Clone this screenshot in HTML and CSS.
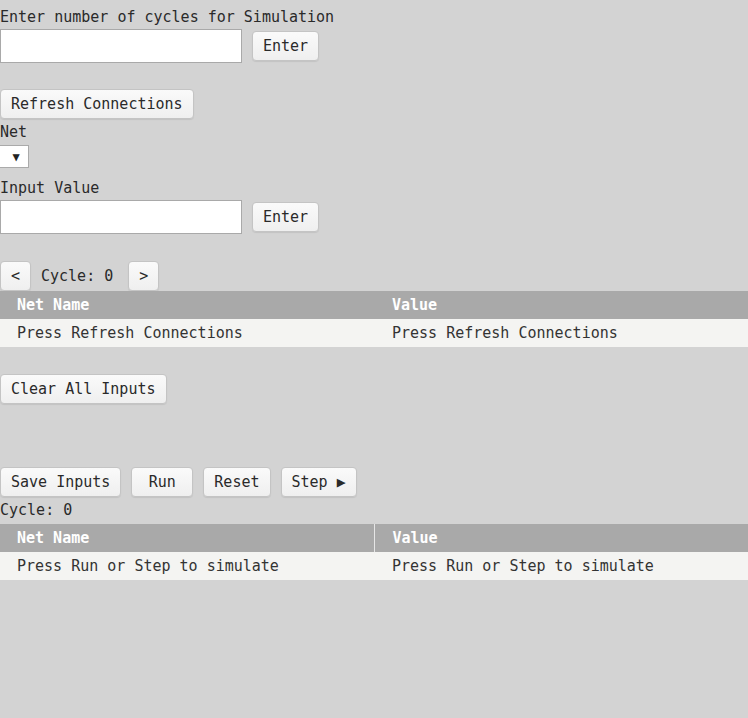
FILE: index.html
```html
<!DOCTYPE html>
<html>
<head>
<meta charset="utf-8">
<link rel="stylesheet" href="styles.css">
</head>
<body>
<div class="page">
  <label class="lbl lbl-first">Enter number of cycles for Simulation</label>
  <div class="field-row">
    <input class="txt" type="text">
    <button class="btn">Enter</button>
  </div>

  <div class="refresh-row">
    <button class="btn">Refresh Connections</button>
  </div>
  <label class="lbl lbl-net">Net</label>
  <div class="select"><span class="arrow">▼</span></div>
  <label class="lbl lbl-input">Input Value</label>
  <div class="field-row field-row-2">
    <input class="txt" type="text">
    <button class="btn">Enter</button>
  </div>

  <div class="cycle-nav">
    <button class="btn btn-sq">&lt;</button>
    <span class="cycle-text">Cycle: 0</span>
    <button class="btn btn-sq">&gt;</button>
  </div>
  <table class="grid">
    <thead><tr><th>Net Name</th><th>Value</th></tr></thead>
    <tbody><tr><td>Press Refresh Connections</td><td>Press Refresh Connections</td></tr></tbody>
  </table>

  <div class="clear-row">
    <button class="btn">Clear All Inputs</button>
  </div>

  <div class="action-row">
    <button class="btn">Save Inputs</button>
    <button class="btn btn-run">Run</button>
    <button class="btn">Reset</button>
    <button class="btn">Step ▶</button>
  </div>
  <div class="cycle-out">Cycle: 0</div>
  <table class="grid grid-split">
    <thead><tr><th>Net Name</th><th>Value</th></tr></thead>
    <tbody><tr><td>Press Run or Step to simulate</td><td>Press Run or Step to simulate</td></tr></tbody>
  </table>
</div>
</body>
</html>
```
FILE: styles.css
```css
html, body {
  margin: 0;
  padding: 0;
  background: #d3d3d3;
}
body {
  font-family: "DejaVu Sans Mono", "Liberation Mono", monospace;
  font-size: 15px;
  color: #2a2a2a;
}
.page {
  display: flex;
  flex-direction: column;
  align-items: flex-start;
}
.lbl {
  display: block;
  line-height: 20px;
  height: 20px;
}
.lbl-first {
  margin-top: 7px;
}
.field-row {
  display: flex;
  align-items: center;
  gap: 10px;
  margin-top: 2px;
}
.field-row-2 {
  margin-top: 2px;
}
.txt {
  box-sizing: border-box;
  width: 242px;
  height: 34px;
  margin: 0;
  border: 1px solid #a9a9a9;
  background: #fff;
  padding: 0 6px;
  font: inherit;
}
.btn {
  box-sizing: border-box;
  height: 30px;
  margin: 0;
  padding: 0 10px;
  font: inherit;
  color: #2a2a2a;
  background: linear-gradient(#fafafa, #efefef);
  border: 1px solid #c4c4c4;
  border-radius: 4px;
  box-shadow: 0 1px 1px rgba(0,0,0,0.08);
  line-height: 28px;
  white-space: nowrap;
}
.refresh-row {
  margin-top: 26px;
}
.lbl-net {
  margin-top: 3px;
}
.select {
  box-sizing: border-box;
  width: 29px;
  height: 23px;
  margin-top: 3px;
  background: #fff;
  border: 1px solid #aaa;
  border-left: none;
  display: flex;
  align-items: center;
  justify-content: center;
  font-size: 12px;
  color: #222;
}
.select .arrow {
  padding-left: 4px;
}
.lbl-input {
  margin-top: 10px;
}
.cycle-nav {
  display: flex;
  align-items: center;
  margin-top: 27px;
}
.btn-sq {
  width: 31px;
  padding: 0;
}
.cycle-text {
  padding: 0 15px 0 10px;
}
.grid {
  width: 100%;
  border-collapse: collapse;
  table-layout: fixed;
  font-family: "DejaVu Sans Mono", monospace;
}
.grid th, .grid td {
  height: 28px;
  padding: 0 17px;
  text-align: left;
  box-sizing: border-box;
}
.grid th + th, .grid td + td {
  padding-left: 18px;
}
.grid th {
  background: #a9a9a9;
  color: #fff;
  font-weight: bold;
}
.grid td {
  background: #f4f4f2;
  color: #333;
}
.grid-split th + th {
  border-left: 1px solid #e6e6e6;
}
.clear-row {
  margin-top: 27px;
}
.action-row {
  display: flex;
  gap: 10px;
  margin-top: 63px;
}
.btn-run {
  width: 62px;
}
.cycle-out {
  line-height: 24px;
  height: 27px;
  padding-top: 1px;
  box-sizing: border-box;
}
```
